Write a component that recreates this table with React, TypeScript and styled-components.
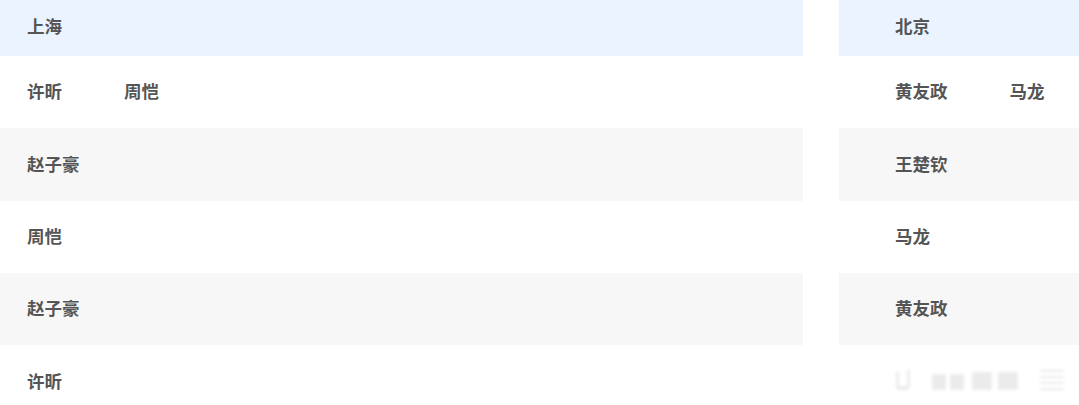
import React from "react";
import styled, { createGlobalStyle } from "styled-components";

const GlobalStyle = createGlobalStyle`
  html, body {
    margin: 0;
    padding: 0;
    background: #fff;
    overflow: hidden;
  }
  body {
    font-family: "Noto Sans CJK SC", "Noto Sans", sans-serif;
  }
`;

const Page = styled.div`
  display: flex;
  gap: 36px;
  width: 1079px;
  height: 405px;
  overflow: hidden;
  position: relative;
`;

const Table = styled.div<{ $width: number; $inset: number }>`
  flex: 0 0 ${(p) => p.$width}px;
  display: flex;
  flex-direction: column;

  & > div {
    padding-left: ${(p) => p.$inset}px;
  }
`;

const HeaderRow = styled.div`
  height: 56px;
  flex: 0 0 56px;
  box-sizing: border-box;
  padding-bottom: 4px;
  background: #ebf3fe;
  display: flex;
  align-items: center;
`;

const Row = styled.div<{ $striped: boolean }>`
  height: 72.3px;
  flex: 0 0 72.3px;
  box-sizing: border-box;
  padding-bottom: 2px;
  background: ${(p) => (p.$striped ? "#f7f7f7" : "#fff")};
  display: flex;
  align-items: center;
  gap: 62px;
`;

const Cell = styled.span`
  font-size: 17.5px;
  font-weight: 700;
  color: #555;
  line-height: 1;
  white-space: nowrap;
`;

const Watermark = styled.div`
  position: absolute;
  left: 884px;
  top: 362px;
  opacity: 0.16;
  filter: blur(1.5px);
`;

const leftRows = [["许昕", "周恺"], ["赵子豪"], ["周恺"], ["赵子豪"], ["许昕"]];
const rightRows = [["黄友政", "马龙"], ["王楚钦"], ["马龙"], ["黄友政"], []];

function DataTable({
  title,
  rows,
  width,
  inset,
}: {
  title: string;
  rows: string[][];
  width: number;
  inset: number;
}) {
  return (
    <Table $width={width} $inset={inset}>
      <HeaderRow>
        <Cell>{title}</Cell>
      </HeaderRow>
      {rows.map((r, i) => (
        <Row key={i} $striped={i % 2 === 1}>
          {r.map((name, j) => (
            <Cell key={j}>{name}</Cell>
          ))}
        </Row>
      ))}
    </Table>
  );
}

export default function App() {
  return (
    <>
      <GlobalStyle />
      <Page>
        <DataTable title="上海" rows={leftRows} width={803} inset={27} />
        <DataTable title="北京" rows={rightRows} width={300} inset={56} />
        <Watermark>
          <svg width="190" height="34" viewBox="0 0 190 34">
            <g fill="#888">
              <path d="M12 10 v14 a4 4 0 0 0 4 4 h6 a4 4 0 0 0 4 -4 v-16 h-3 v16 h-8 v-14 z" />
              <rect x="48" y="12" width="14" height="16" rx="2" />
              <rect x="66" y="12" width="14" height="16" rx="2" />
              <rect x="88" y="10" width="20" height="18" rx="2" />
              <rect x="114" y="10" width="20" height="18" rx="2" />
              <rect x="156" y="8" width="24" height="2" />
              <rect x="156" y="14" width="24" height="2" />
              <rect x="156" y="20" width="24" height="2" />
              <rect x="156" y="26" width="24" height="2" />
            </g>
          </svg>
        </Watermark>
      </Page>
    </>
  );
}
